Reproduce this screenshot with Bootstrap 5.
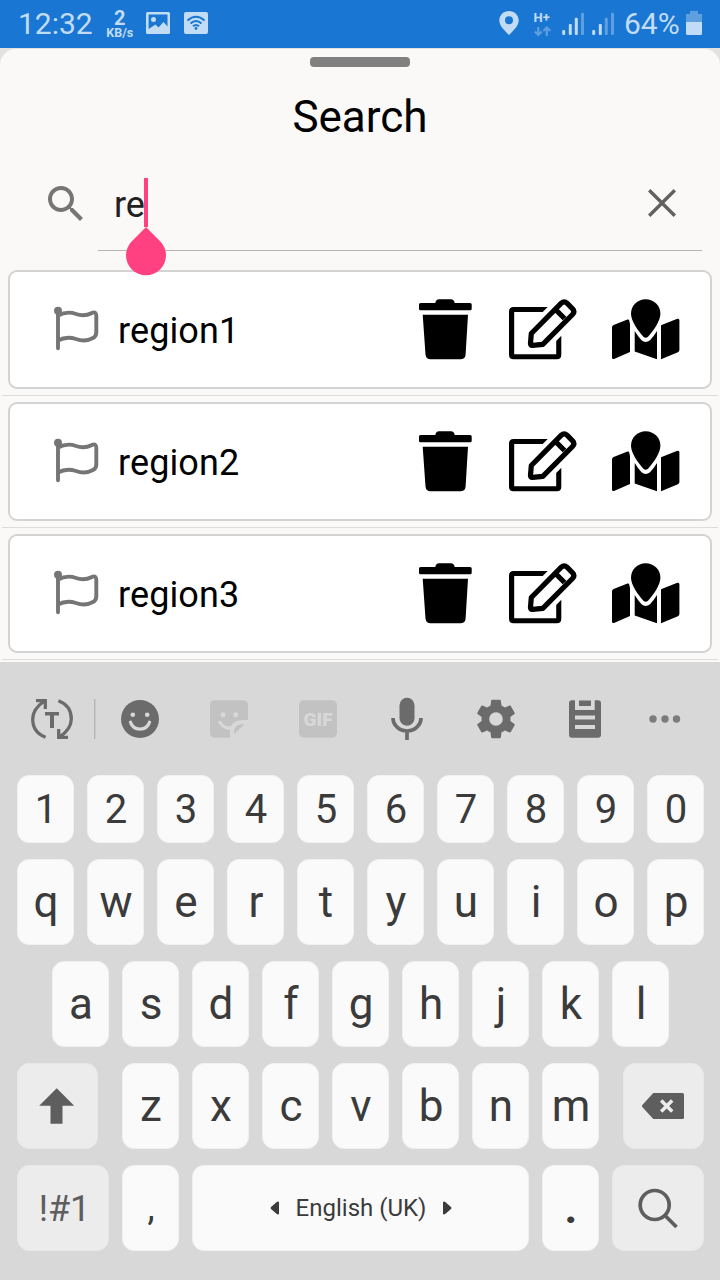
<!DOCTYPE html>
<html lang="en">
<head>
<meta charset="utf-8">
<meta name="viewport" content="width=device-width, initial-scale=1">
<title>Search</title>
<link href="https://cdn.jsdelivr.net/npm/bootstrap@5.3.0/dist/css/bootstrap.min.css" rel="stylesheet">
<style>
  body { font-family: Roboto, "Liberation Sans", sans-serif; background: #e4e2e0; color: #000; width: 720px; height: 1280px; overflow: hidden; }
  svg { display: block; flex: none; }
  .statusbar { height: 48px; background: #1976d2; color: #c2dcf5; padding-left: 18px; font-size: 30px; line-height: 48px; }
  .net-speed { width: 30px; margin-left: 12px; margin-right: 1px; line-height: 1; font-weight: 700; }
  .net-speed .val { font-size: 20px; line-height: 18px; padding-top: 9px; }
  .net-speed .unit { font-size: 12.5px; line-height: 11px; }
  .battery-text { width: 56px; margin-left: 4px; }
  .sheet { height: 613px; margin-top: 1px; background: #faf9f8; border-radius: 16px 16px 0 0; }
  .grabber { width: 100px; height: 10px; margin-top: 8px; border-radius: 4px; background: #808080; }
  .title { font-size: 44px; line-height: 52px; margin-top: 24px; }
  .searchbar { height: 72px; margin-top: 36px; padding-left: 42px; }
  .field { width: 604px; height: 72px; margin-left: 8px; border-bottom: 1px solid #b5b5b5; font-size: 36px; line-height: 53px; color: #212121; padding-left: 16px; }
  .caret { left: 28px; top: -1px; z-index: 2; }
  .clear { margin-left: auto; margin-right: 16px; }
  .region-list { margin-top: 19px; }
  .region { height: 119px; margin: 0 8px; border: 2px solid #d3d3d3; border-radius: 9px; background: #fff; padding: 0 30px 0 44px; }
  .region + .rule { height: 1px; margin: 6px 2px; background: #dcdcdc; }
  .region svg.marker { margin-bottom: 2px; }
  .region-name { font-size: 36px; letter-spacing: .1px; margin-left: 19px; width: 301px; padding-top: 2px; }
  .keyboard { height: 618px; background: #d8d8d8; color: #3b3b3b; }
  .tools { height: 113px; padding-top: 1px; }
  .tool { width: 89px; }
  .keys { gap: 16px; padding-left: 17px; }
  .keyrow { height: 86px; gap: 13px; }
  .keyrow.digits { height: 68px; }
  .key { width: 57px; background: #fafafa; border: 1px solid #f1f1f1; border-radius: 12px; font-size: 44px; line-height: 1; display: flex; align-items: center; justify-content: center; flex: none; padding-left: 1px; }
  .digits .key { font-size: 40px; padding-top: 2px; }
  .fn { background: #ececec; border-color: #e8e8e8; color: #5e5e5e; font-size: 36px; padding-left: 0; padding-right: 1px; }
  .fn.sym { padding: 2px 0 0 3px; }
</style>
<script src="https://cdn.jsdelivr.net/npm/bootstrap@5.3.0/dist/js/bootstrap.bundle.min.js"></script>
</head>
<body>
<svg width="0" height="0" class="position-absolute">
  <symbol id="flag" viewBox="54 306 45 45">
    <circle cx="58" cy="310.7" r="4" fill="#757575"/>
    <path d="M58 311V348.3M58 315.5C66 311.300 72 312.500 76 314C82 316.200 86 316 92 312.900Q96.300 311 96.300 316V332.500Q96.300 336.200 93 338C86 341.800 80 340.500 76 339C70 337 64 337.200 58 340.500" fill="none" stroke="#757575" stroke-width="3.9" stroke-linecap="round" stroke-linejoin="round"/>
  </symbol>
  <symbol id="trash" viewBox="419 299 53 61">
    <path d="M420.500 303H435.300Q436 299.300 439 299.300H451Q454 299.300 454.700 303H470.200Q471.700 303 471.700 304.500V308.800Q471.700 310.300 470.200 310.300H420.500Q419 310.300 419 308.800V304.500Q419 303 420.500 303ZM422.700 314.700H468L465.600 354.500Q465.200 359.300 460.500 359.300H430.500Q426 359.300 425.500 354.500Z"/>
  </symbol>
  <symbol id="edit" viewBox="507 299 69 61">
    <path d="M508 311.500Q508 307 512.500 307H546.700L541.700 312H513.200V354.200H555.200V341L560.300 335.700V354.800Q560.300 359.300 555.800 359.300H512.500Q508 359.300 508 354.800Z"/>
    <path d="M530.300 333.500L560.300 303.200Q563.200 300.600 566 303.200L571.600 308.800Q574.200 311.700 571.500 314.500L541.800 344.300L531.500 345.300Q529.300 345.500 529.500 343.200ZM556 311L563.500 318.500" fill="none" stroke="#000" stroke-width="5.200" stroke-linejoin="round"/>
  </symbol>
  <symbol id="map" viewBox="612 299 68 61">
    <path d="M645.700 299.300C654 299.300 660.400 305.800 660.400 313.700C660.400 321 653.500 330.500 648 336.700Q645.700 338.800 643.400 336.700C637.900 330.500 631 321 631 313.700C631 305.800 637.400 299.300 645.700 299.300Z"/>
    <path d="M612 327.500Q612 325.700 613.600 325L627.500 319.500Q629 319 629.200 320.500L630 324V352L614 359Q612 359.500 612 357.500ZM634.700 331Q638 336.500 641.500 340.200Q645.700 343.700 650 340.200Q654 336 657 331V359.300L634.700 351.500ZM661 325.300L677.300 318.700Q679.400 318.300 679.400 320.300V350Q679.400 351.500 677.900 352.200L661 359.300Z"/>
  </symbol>
</svg>

<header class="statusbar d-flex">
  <div>12:32</div>
  <div class="net-speed text-center"><div class="val">2</div><div class="unit">KB/s</div></div>
  <svg width="74" height="48" viewBox="136 0 74 48">
    <rect x="146" y="12" width="24" height="22" rx="1.500" fill="#c2dcf5"/>
    <path d="M148.600 14.600H167.500V26.500L163.500 22L158.500 27.500L155.500 24.500L148.600 29Z" fill="#1976d2"/>
    <circle cx="153.500" cy="19.500" r="2.500" fill="#c2dcf5"/>
    <rect x="184" y="12" width="24" height="22" rx="2" fill="#c2dcf5"/>
    <g fill="none" stroke="#1976d2" stroke-width="2"><path d="M187.500 20.500Q196 13 204.500 20.500M190.500 23.500Q196 18.500 201.500 23.500M193 26.300Q196 23.600 199 26.300"/></g>
    <circle cx="196" cy="28.500" r="1.400" fill="#1976d2"/>
  </svg>
  <svg class="ms-auto" width="122" height="48" viewBox="498 0 122 48" fill="#c2dcf5">
    <path fill-rule="evenodd" d="M509 11C514.500 11 518.700 15.200 518.700 20.500C518.700 26 513 31 509 35C505 31 499.300 26 499.300 20.500C499.300 15.200 503.500 11 509 11ZM509 16.200A4 4 0 1 0 509 24.200A4 4 0 1 0 509 16.200Z"/>
    <text x="533.500" y="22" font-size="13" font-weight="700">H+</text>
    <path d="M538.300 27V35M534.800 31.500L538.300 35L541.800 31.500M546.800 36V28M543.300 31L546.800 27.500L550.300 31" fill="none" stroke="#5e9fe0" stroke-width="2.200"/>
    <rect x="562.200" y="30" width="3" height="5" rx="1"/><rect x="568.800" y="24" width="3" height="11" rx="1"/>
    <rect x="574.800" y="17.700" width="3" height="17.300" rx="1"/><rect x="581" y="12.700" width="3" height="22.300" rx="1" fill="#5e9fe0"/>
    <rect x="592.200" y="30" width="3" height="5" rx="1"/><rect x="598.800" y="24" width="3" height="11" rx="1"/>
    <rect x="604.800" y="17.700" width="3" height="17.300" rx="1" fill="#5e9fe0"/><rect x="611" y="12.700" width="3" height="22.300" rx="1" fill="#5e9fe0"/>
  </svg>
  <div class="battery-text">64%</div>
  <svg width="36" height="48" viewBox="680 0 40 48" preserveAspectRatio="none" style="width:40px">
    <path d="M686 14H690V11H698V14H702V23H686Z" fill="#5e9fe0"/><path d="M686 22H702V33.500Q702 35 700.500 35H687.500Q686 35 686 33.500Z" fill="#c2dcf5"/>
  </svg>
</header>

<main class="sheet d-flex flex-column">
  <div class="grabber align-self-center flex-shrink-0"></div>
  <h1 class="title fw-normal text-center mb-0">Search</h1>
  <div class="searchbar d-flex">
    <svg style="margin-top:1px" width="48" height="48" viewBox="0 0 24 24" fill="#757575"><path d="M15.500 14h-.79l-.28-.27C15.410 12.590 16 11.110 16 9.500 16 5.910 13.090 3 9.500 3S3 5.910 3 9.500 5.910 16 9.500 16c1.610 0 3.090-.59 4.230-1.570l.27.28v.79l5 4.990L20.490 19l-4.990-5zm-6 0C7.010 14 5 11.990 5 9.500S7.010 5 9.500 5 14 7.010 14 9.500 11.990 14 9.500 14z"/></svg>
    <div class="field position-relative d-flex">
      <span>re</span>
      <svg class="caret position-absolute" width="42" height="99" viewBox="126 178 42 99" fill="#ff4081"><path d="M144 178H148V227H144ZM146 227L160.140 241.140A20 20 0 1 1 131.860 241.140Z"/></svg>
      <svg class="clear" width="48" height="48" viewBox="0 0 24 24" fill="#616161"><path d="M19 6.200 17.800 5 12 10.800 6.200 5 5 6.200 10.800 12 5 17.800 6.200 19 12 13.200 17.800 19 19 17.800 13.200 12z"/></svg>
    </div>
  </div>
  <section class="region-list">
    <div class="region d-flex align-items-center">
      <svg width="45" height="45" class="marker"><use href="#flag"/></svg><div class="region-name">region1</div>
      <svg width="53" height="61"><use href="#trash"/></svg><svg class="ms-auto" width="69" height="61"><use href="#edit"/></svg><svg class="ms-auto" width="68" height="61"><use href="#map"/></svg>
    </div>
    <div class="rule"></div>
    <div class="region d-flex align-items-center">
      <svg width="45" height="45" class="marker"><use href="#flag"/></svg><div class="region-name">region2</div>
      <svg width="53" height="61"><use href="#trash"/></svg><svg class="ms-auto" width="69" height="61"><use href="#edit"/></svg><svg class="ms-auto" width="68" height="61"><use href="#map"/></svg>
    </div>
    <div class="rule"></div>
    <div class="region d-flex align-items-center">
      <svg width="45" height="45" class="marker"><use href="#flag"/></svg><div class="region-name">region3</div>
      <svg width="53" height="61"><use href="#trash"/></svg><svg class="ms-auto" width="69" height="61"><use href="#edit"/></svg><svg class="ms-auto" width="68" height="61"><use href="#map"/></svg>
    </div>
    <div class="rule mb-0"></div>
  </section>
</main>

<section class="keyboard">
  <div class="tools d-flex align-items-center">
    <svg width="95.500" height="44" viewBox="0 -22 95.500 44">
      <g fill="none" stroke="#6b6b6b" stroke-width="3.300">
        <path id="turn" d="M45.600 18.200C37 15 32.700 8 32.700 0C32.700 -7 37 -13 44.500 -18M36 -18.300H45.300V-10"/>
        <use href="#turn" transform="rotate(180 52 0)"/>
      </g>
      <path d="M45 -7H59V-3.500H54V9H50V-3.500H45Z" fill="#6b6b6b"/>
      <rect x="94" y="-20" width="1.500" height="40" fill="#b8b8b8"/>
    </svg>
    <div class="tool d-flex justify-content-center"><svg width="44" height="44" viewBox="-22 -22 44 44"><circle r="19" fill="#6b6b6b"/><g fill="#d8d8d8"><circle cx="-7.200" cy="-4.300" r="2.300"/><circle cx="7.200" cy="-4.300" r="2.300"/></g><path d="M-9.500 3.300C-6.500 12.300 6.500 12.300 9.500 3.300" fill="none" stroke="#d8d8d8" stroke-width="3.300" stroke-linecap="round"/></svg></div>
    <div class="tool d-flex justify-content-center"><svg width="44" height="44" viewBox="-22 -22 44 44"><path d="M-14 -18.700H14Q19 -18.700 19 -13.700V1H13Q1 2 1 12V18.700H-14Q-19 18.700 -19 13.700V-13.700Q-19 -18.700 -14 -18.700ZM5 15V12Q5.500 5 15.700 5Z" fill="#c2c2c2"/><g fill="#d8d8d8"><circle cx="-6" cy="-4.300" r="2.500"/><circle cx="6.700" cy="-4.300" r="2.500"/></g><path d="M-9 3.500Q-5 10.500 4 9" fill="none" stroke="#d8d8d8" stroke-width="3.300" stroke-linecap="round"/></svg></div>
    <div class="tool d-flex justify-content-center"><svg width="44" height="44" viewBox="-22 -22 44 44"><rect x="-19" y="-18.700" width="38" height="37.400" rx="5" fill="#c2c2c2"/><text x="0" y="7" text-anchor="middle" font-size="19" font-weight="900" fill="#d8d8d8">GIF</text></svg></div>
    <div class="tool d-flex justify-content-center"><svg width="44" height="44" viewBox="-22 -22 44 44"><rect x="-7.500" y="-21.300" width="15" height="28" rx="7.500" fill="#6b6b6b"/><path d="M-14 -1A14 13 0 0 0 14 -1M0 11V21" fill="none" stroke="#6b6b6b" stroke-width="3.700"/></svg></div>
    <div class="tool d-flex justify-content-center"><svg width="44" height="44" viewBox="-22 -22 44 44"><path transform="scale(1.93) translate(-12 -12)" fill="#6b6b6b" d="M19.430 12.980c.04-.32.07-.64.07-.98s-.03-.66-.07-.98l2.110-1.650c.19-.15.24-.42.12-.64l-2-3.460c-.12-.22-.39-.3-.61-.22l-2.490 1c-.52-.4-1.080-.73-1.690-.98l-.38-2.650C14.460 2.180 14.250 2 14 2h-4c-.25 0-.46.18-.49.42l-.38 2.650c-.61.25-1.170.59-1.690.98l-2.490-1c-.23-.09-.49 0-.61.22l-2 3.460c-.13.22-.07.49.12.64l2.110 1.650c-.04.32-.07.65-.07.98s.03.66.07.98l-2.110 1.650c-.19.15-.24.42-.12.64l2 3.460c.12.22.39.3.61.22l2.490-1c.52.4 1.080.73 1.690.98l.38 2.650c.03.24.24.42.49.42h4c.25 0 .46-.18.49-.42l.38-2.650c.61-.25 1.170-.59 1.690-.98l2.490 1c.23.09.49 0 .61-.22l2-3.460c.12-.22.07-.49-.12-.64l-2.110-1.650zM12 15.500c-1.930 0-3.500-1.570-3.500-3.500s1.570-3.500 3.500-3.500 3.500 1.570 3.500 3.500-1.570 3.500-3.500 3.500z"/></svg></div>
    <div class="tool d-flex justify-content-center"><svg width="44" height="44" viewBox="-22 -22 44 44"><path fill="#6b6b6b" d="M-13 -18.700H-10V-9H9.700V-18.700H13Q16 -18.700 16 -15.700V15.700Q16 18.700 13 18.700H-13Q-16 18.700 -16 15.700V-15.700Q-16 -18.700 -13 -18.700ZM-6 -18.500H6V-13H-6Z"/><path d="M-10 -1.500H10M-10 8H10" stroke="#d8d8d8" stroke-width="4"/></svg></div>
    <svg width="70" height="44" viewBox="-35 -22 70 44" fill="#7c7c7c"><circle cx="-12" r="3.700"/><circle r="3.700"/><circle cx="11.500" r="3.700"/></svg>
  </div>

  <div class="keys d-flex flex-column">
    <div class="keyrow digits d-flex"><span class="key">1</span><span class="key">2</span><span class="key">3</span><span class="key">4</span><span class="key">5</span><span class="key">6</span><span class="key">7</span><span class="key">8</span><span class="key">9</span><span class="key">0</span></div>
    <div class="keyrow d-flex"><span class="key">q</span><span class="key">w</span><span class="key">e</span><span class="key">r</span><span class="key">t</span><span class="key">y</span><span class="key">u</span><span class="key">i</span><span class="key">o</span><span class="key">p</span></div>
    <div class="keyrow d-flex" style="padding-left:35px"><span class="key">a</span><span class="key">s</span><span class="key">d</span><span class="key">f</span><span class="key">g</span><span class="key">h</span><span class="key">j</span><span class="key">k</span><span class="key">l</span></div>
    <div class="keyrow d-flex">
      <span class="key fn" style="width:81px;margin-right:11px"><svg width="36" height="36" viewBox="39.500 1088 36 36" fill="#5e5e5e"><path d="M57.200 1088.300L74.700 1105.700H63V1123.700H51V1105.700H39.700Z"/></svg></span>
      <span class="key">z</span><span class="key">x</span><span class="key">c</span><span class="key">v</span><span class="key">b</span><span class="key">n</span><span class="key">m</span>
      <span class="key fn" style="width:81px;margin-left:11px"><svg width="42" height="26" viewBox="642 1093 42 26"><path d="M653.300 1093H682.500Q684 1093 684 1094.500V1117.500Q684 1119 682.500 1119H653.300L642.300 1107Q641.700 1106 642.300 1105Z" fill="#5e5e5e"/><path d="M661.200 1100.500L672.200 1111.500M672.200 1100.500L661.200 1111.500" stroke="#ececec" stroke-width="3.500"/></svg></span>
    </div>
    <div class="keyrow d-flex">
      <span class="key fn sym" style="width:92px">!#1</span>
      <span class="key" style="font-size:36px">,</span>
      <span class="key" style="width:337px;font-size:24px">
        <svg width="10" height="14" viewBox="0 0 10 14" fill="#3b3b3b"><path d="M9 1V13Q8 14 6.500 12.800L1 8Q0 7 1 6L6.500 1.200Q8 0 9 1Z"/></svg>
        <span class="px-3">English (UK)</span>
        <svg width="10" height="14" viewBox="0 0 10 14" fill="#3b3b3b"><path d="M1 1V13Q2 14 3.500 12.800L9 8Q10 7 9 6L3.500 1.200Q2 0 1 1Z"/></svg>
      </span>
      <span class="key fw-bold">.</span>
      <span class="key fn" style="width:92px"><svg width="42" height="42" viewBox="637 1187 42 42" fill="none" stroke="#5e5e5e" stroke-width="3.700"><circle cx="654.700" cy="1205" r="14.500"/><path d="M665 1215.500L676.500 1227"/></svg></span>
    </div>
  </div>
</section>
</body>
</html>
